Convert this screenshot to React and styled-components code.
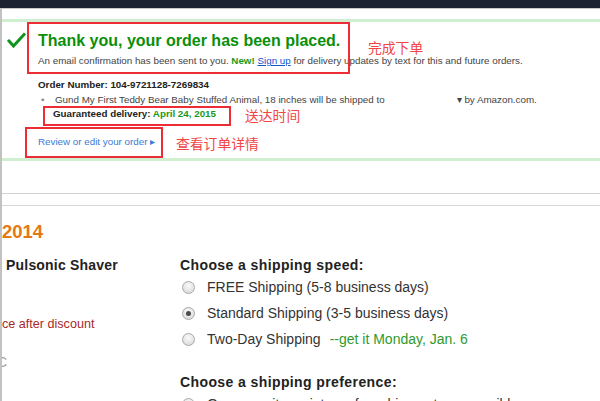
import styled, { createGlobalStyle } from "styled-components";

const Global = createGlobalStyle`
  html, body {
    margin: 0;
    padding: 0;
    background: #fff;
  }
  body {
    font-family: "Liberation Sans", Arial, sans-serif;
    color: #333;
  }
`;

const Screen = styled.div`
  width: 600px;
  height: 401px;
  overflow: hidden;
  background: #fff;
`;

const TopBar = styled.div`
  height: 8px;
  background: #1d2232;
  border-bottom: 1px solid #c8c8c8;
`;

const Frame = styled.div`
  border-left: 2px solid #c2c2c2;
  height: 392px;
`;

const Upper = styled.div`
  padding-top: 10px;
  padding-bottom: 32px;
  border-bottom: 1px solid #d2d2d2;
`;

const Panel = styled.div`
  position: relative;
  display: grid;
  grid-template-columns: 36px 1fr;
  border-top: 3px solid #d0efd0;
  border-bottom: 3px solid #d0efd0;
  padding: 10px 0 10px;
`;

const CheckCell = styled.div`
  padding: 0 0 0 5px;
`;

const Body = styled.div`
  font-size: 9.8px;
  color: #444;
`;

const Heading = styled.h1`
  margin: 0;
  font-size: 16px;
  line-height: 18px;
  font-weight: bold;
  color: #0a8f0a;
`;

const Line = styled.div`
  line-height: 12px;
  margin-top: ${(p) => p.$gap || 0}px;
  white-space: nowrap;
`;

const Strong = styled.b`
  color: ${(p) => (p.$green ? "#1a9a1a" : "#222")};
`;

const Link = styled.span`
  color: ${(p) => (p.$plain ? "#3a7bd5" : "#1155cc")};
  text-decoration: ${(p) => (p.$plain ? "none" : "underline")};
`;

const Bullet = styled.span`
  display: inline-block;
  width: 14px;
  padding-left: 3px;
  color: #888;
`;

const Seller = styled.span`
  margin-left: 72px;
`;

const Indent = styled.span`
  padding-left: 15px;
`;

const Mark = styled.div`
  position: absolute;
  box-sizing: border-box;
  border: 2px solid #ec2d36;
  left: ${(p) => p.$x}px;
  top: ${(p) => p.$y}px;
  width: ${(p) => p.$w}px;
  height: ${(p) => p.$h}px;
`;

const Note = styled.div`
  position: absolute;
  left: ${(p) => p.$x}px;
  top: ${(p) => p.$y}px;
  font-family: "Noto Sans CJK SC", sans-serif;
  font-size: 13.8px;
  line-height: 18px;
  color: #f24545;
  white-space: nowrap;
`;

const Lower = styled.div`
  margin-top: 11px;
  border-top: 1px solid #d6d6d6;
  padding-top: 15px;
`;

const Year = styled.div`
  font-size: 18.5px;
  line-height: 22px;
  font-weight: bold;
  color: #e47911;
`;

const Columns = styled.div`
  display: grid;
  grid-template-columns: 178px 1fr;
  margin-top: 13px;
`;

const Left = styled.div`
  overflow: hidden;
`;

const ItemTitle = styled.div`
  font-size: 14px;
  line-height: 18px;
  font-weight: bold;
  letter-spacing: 0.2px;
  color: #222;
  padding-left: 4px;
`;

const Discount = styled.div`
  margin-top: 42px;
  font-size: 12.6px;
  line-height: 16px;
  color: #a8282a;
  white-space: nowrap;
`;

const Faded = styled.div`
  margin-top: 22px;
  margin-left: -5px;
  font-size: 14px;
  line-height: 16px;
  color: #999;
`;

const Title = styled.div`
  font-size: 14px;
  line-height: 18px;
  font-weight: bold;
  letter-spacing: 0.4px;
  color: #222;
  margin-top: ${(p) => p.$gap || 0}px;
`;

const Option = styled.label`
  display: flex;
  align-items: center;
  height: 26px;
  font-size: 14px;
  color: #333;
  white-space: nowrap;
`;

const Radio = styled.span`
  box-sizing: border-box;
  width: 13px;
  height: 13px;
  margin: 0 12px 0 2px;
  border-radius: 50%;
  border: 1px solid #a9a9a9;
  background: radial-gradient(circle at 50% 35%, #fafafa 0%, #e4e4e4 60%, #d2d2d2 100%);
  display: flex;
  align-items: center;
  justify-content: center;
  flex-shrink: 0;

  &::after {
    content: "";
    width: 5px;
    height: 5px;
    border-radius: 50%;
    background: ${(p) => (p.$on ? "#4a4a4a" : "transparent")};
  }
`;

const Promo = styled.span`
  color: #2e9a2e;
  margin-left: 9px;
`;

function Check() {
  return (
    <svg width="19" height="17" viewBox="0 0 19 17">
      <polyline
        points="2,9 6.5,14 17,2.5"
        fill="none"
        stroke="#11941a"
        strokeWidth="3"
        strokeLinecap="square"
      />
    </svg>
  );
}

export default function App() {
  return (
    <Screen>
      <Global />
      <TopBar />
      <Frame>
        <Upper>
          <Panel>
            <CheckCell>
              <Check />
            </CheckCell>
            <Body>
              <Heading>Thank you, your order has been placed.</Heading>
              <Line $gap={5}>
                An email confirmation has been sent to you. <Strong $green>New!</Strong>{" "}
                <Link>Sign up</Link> for delivery updates by text for this and future orders.
              </Line>
              <Line $gap={12}>
                <Strong>Order Number: 104-9721128-7269834</Strong>
              </Line>
              <Line $gap={3}>
                <Bullet>•</Bullet>
                Gund My First Teddy Bear Baby Stuffed Animal, 18 inches will be shipped to
                <Seller>▾ by Amazon.com.</Seller>
              </Line>
              <Line $gap={2}>
                <Indent>
                  <Strong>Guaranteed delivery: </Strong>
                  <Strong $green>April 24, 2015</Strong>
                </Indent>
              </Line>
              <Line $gap={16}>
                <Link $plain>Review or edit your order ▸</Link>
              </Line>
            </Body>
            <Mark $x={25} $y={0} $w={323} $h={52} />
            <Mark $x={41} $y={84} $w={188} $h={20} />
            <Mark $x={23} $y={105} $w={138} $h={31} />
            <Note $x={366} $y={16}>完成下单</Note>
            <Note $x={243} $y={84}>送达时间</Note>
            <Note $x={174} $y={112}>查看订单详情</Note>
          </Panel>
        </Upper>
        <Lower>
          <Year>2014</Year>
          <Columns>
            <Left>
              <ItemTitle>Pulsonic Shaver</ItemTitle>
              <Discount>ce after discount</Discount>
              <Faded>C</Faded>
            </Left>
            <div>
              <Title>Choose a shipping speed:</Title>
              <Option>
                <Radio />
                FREE Shipping (5-8 business days)
              </Option>
              <Option>
                <Radio $on />
                Standard Shipping (3-5 business days)
              </Option>
              <Option>
                <Radio />
                Two-Day Shipping
                <Promo>--get it Monday, Jan. 6</Promo>
              </Option>
              <Title $gap={21}>Choose a shipping preference:</Title>
              <Option>
                <Radio $on />
                Group my items into as few shipments as possible
              </Option>
            </div>
          </Columns>
        </Lower>
      </Frame>
    </Screen>
  );
}
